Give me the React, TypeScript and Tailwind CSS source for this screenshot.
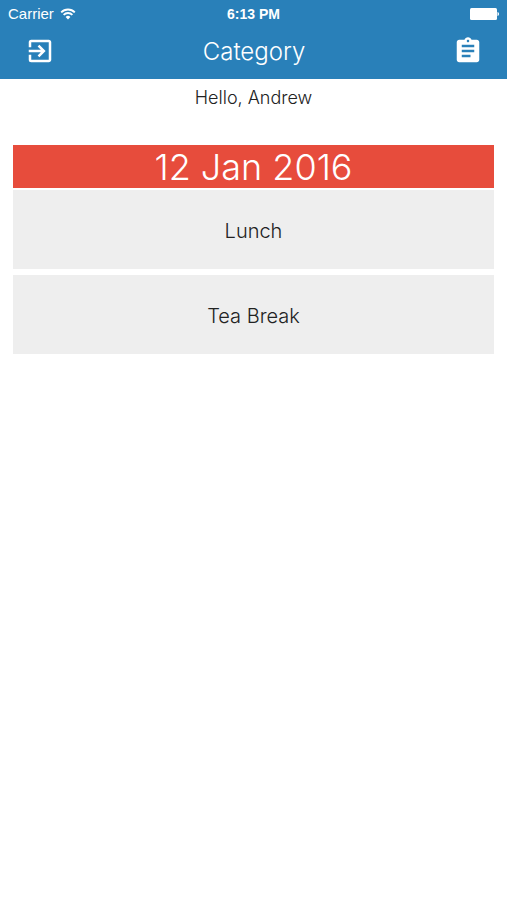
import { MdAssignment, MdExitToApp } from "react-icons/md";

const categories = ["Lunch", "Tea Break"];

function StatusBar() {
  return (
    <div className="grid h-7 grid-cols-3 items-center px-2 font-['Liberation_Sans',sans-serif] text-sm leading-4">
      <div className="flex items-center gap-1.5">
        <span className="text-[15px] leading-4">Carrier</span>
        <svg viewBox="0 0 16 12" className="h-3 w-4" fill="none" aria-hidden="true">
          <path d="M1.2 4.3a9.6 9.6 0 0 1 13.6 0" stroke="currentColor" strokeWidth="1.9" />
          <path d="M3.6 6.9a6.2 6.2 0 0 1 8.8 0" stroke="currentColor" strokeWidth="1.9" />
          <path d="M8 11.4 5.6 9a3.4 3.4 0 0 1 4.8 0z" fill="currentColor" />
        </svg>
      </div>
      <span className="text-center font-bold">6:13 PM</span>
      <svg viewBox="0 0 30 12" className="h-3 w-[30px] justify-self-end" fill="currentColor" aria-hidden="true">
        <rect x="1" y="0" width="27" height="12" rx="1.5" />
        <path d="M28.500 4c2 .5 2 3.500 0 4z" />
      </svg>
    </div>
  );
}

function NavBar() {
  return (
    <nav className="flex h-[51px] items-start justify-between pr-6 pl-[25px]">
      <button type="button" aria-label="Log out" className="mt-2">
        <MdExitToApp className="size-[30px]" />
      </button>
      <h1 className="mt-1 text-[24px] leading-10 font-light">Category</h1>
      <button type="button" aria-label="Orders" className="mt-2">
        <MdAssignment className="size-[30px]" />
      </button>
    </nav>
  );
}

export default function App() {
  return (
    <div className="min-h-screen bg-white font-['Inter','Liberation_Sans',sans-serif] text-[#222222]">
      <header className="bg-[#2980b9] text-white">
        <StatusBar />
        <NavBar />
      </header>

      <main className="px-[13px] pt-[7px] text-center">
        <p className="text-lg leading-6 font-light">Hello, Andrew</p>

        <section className="mt-[35px]">
          <h2 className="bg-[#e74c3c] pt-px text-[36px] leading-[42px] font-light text-white">
            12 Jan 2016
          </h2>
          <ul className="mt-0.5 flex flex-col gap-1.5">
            {categories.map((name) => (
              <li key={name}>
                <button
                  type="button"
                  className="block h-[79px] w-full bg-[#eeeeee] pt-0.5 text-xl font-light"
                >
                  {name}
                </button>
              </li>
            ))}
          </ul>
        </section>
      </main>
    </div>
  );
}
